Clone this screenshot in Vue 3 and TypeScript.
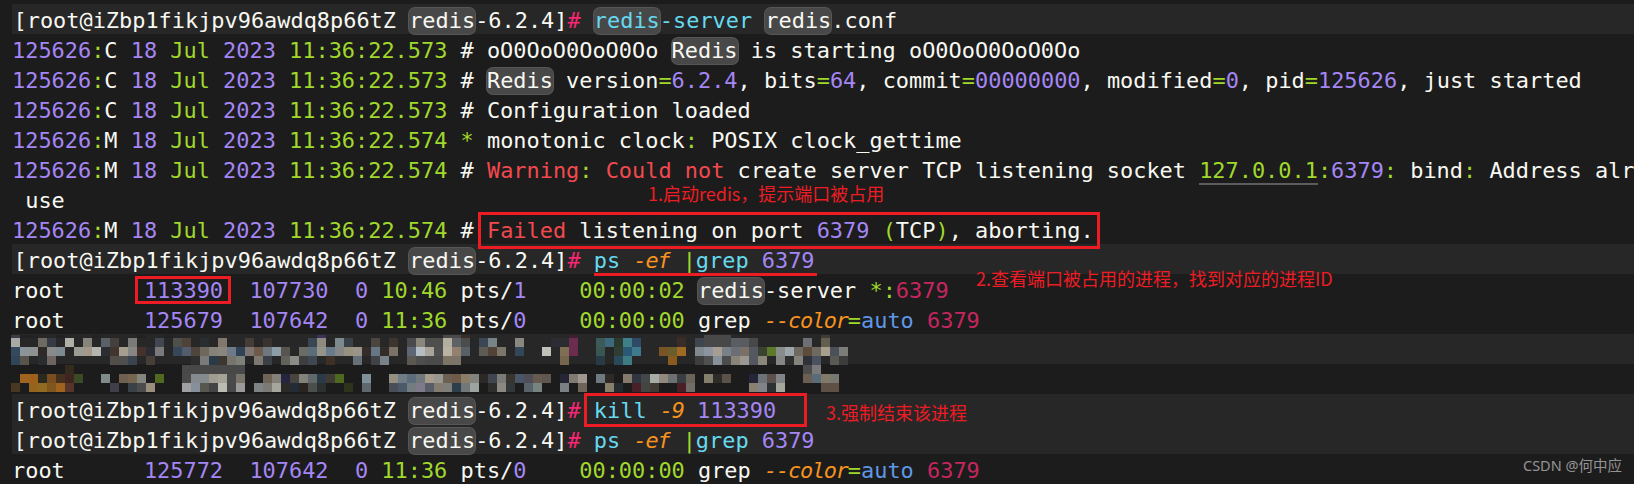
<script setup lang="ts">
type Tok = [string, string?]
interface Row { toks: Tok[]; lit?: boolean; empty?: boolean }

const chip = (c = 'w'): Tok => ['redis', 'chip ' + c]
const prompt = (): Tok[] => [
  ['[root@iZbp1fikjpv96awdq8p66tZ ', 'w'],
  chip(),
  ['-6.2.4]', 'w'],
  ['#', 'pk'],
  [' ']
]
const log = (role: string, ms: string): Tok[] => [
  ['125626', 'p'], [':', 'g'], [role + ' ', 'w'],
  ['18', 'p'], [' '], ['Jul', 'g'], [' '], ['2023', 'p'], [' '],
  ['11:36:22.' + ms, 'g'], [' ']
]
const psGrep = (): Tok[] => [
  ...prompt(),
  ['ps', 'c'], [' '], ['-ef', 'o'], [' '], ['|', 'g'], ['grep', 'c'], [' '], ['6379', 'p']
]
const proc = (pid: string, ppid: string, start: string, tty: string, time: string): Tok[] => [
  ['root      ', 'w'], [pid, 'p'], ['  '], [ppid, 'p'], ['  '], ['0', 'p'], [' '],
  [start, 'g'], [' '], ['pts/', 'w'], [tty, 'p'], ['    '], [time, 'g'], [' ']
]
const grepTail = (): Tok[] => [
  ['grep ', 'w'], ['--color', 'o'], ['=', 'g'], ['auto', 'b'], [' '], ['6379', 'r2']
]

const rows: Row[] = [
  { lit: true, toks: [...prompt(), ['redis', 'chip c'], ['-server ', 'c'], chip(), ['.conf', 'w']] },
  { toks: [...log('C', '573'), ['# oO0OoO0OoO0Oo ', 'w'], ['Redis', 'chip w'], [' is starting oO0OoO0OoO0Oo', 'w']] },
  { toks: [...log('C', '573'), ['# ', 'w'], ['Redis', 'chip w'], [' version', 'w'], ['=', 'g'], ['6.2.4', 'p'], [', bits', 'w'], ['=', 'g'], ['64', 'p'], [', commit', 'w'], ['=', 'g'], ['00000000', 'p'], [', modified', 'w'], ['=', 'g'], ['0', 'p'], [', pid', 'w'], ['=', 'g'], ['125626', 'p'], [', just started', 'w']] },
  { toks: [...log('C', '573'), ['# Configuration loaded', 'w']] },
  { toks: [...log('M', '574'), ['* ', 'g'], ['monotonic clock', 'w'], [':', 'g'], [' POSIX clock_gettime', 'w']] },
  { toks: [...log('M', '574'), ['# ', 'w'], ['Warning', 'r'], [':', 'g'], [' '], ['Could not', 'r'], [' create server TCP listening socket ', 'w'], ['127.0.0.1', 'g link'], [':', 'g'], ['6379', 'p'], [':', 'g'], [' bind', 'w'], [':', 'g'], [' Address alr', 'w']] },
  { toks: [[' use', 'w']] },
  { toks: [...log('M', '574'), ['# ', 'w'], ['Failed', 'r'], [' listening on port ', 'w'], ['6379', 'p'], [' '], ['(', 'g'], ['TCP', 'w'], [')', 'g'], [', aborting.', 'w']] },
  { lit: true, toks: psGrep() },
  { toks: [...proc('113390', '107730', '10:46', '1', '00:00:02'), chip(), ['-server ', 'w'], ['*:', 'g'], ['6379', 'r2']] },
  { toks: [...proc('125679', '107642', '11:36', '0', '00:00:00'), ...grepTail()] },
  { lit: true, empty: true, toks: [] },
  { empty: true, toks: [] },
  { lit: true, toks: [...prompt(), ['kill', 'c'], [' '], ['-9', 'o'], [' '], ['113390', 'p']] },
  { lit: true, toks: psGrep() },
  { toks: [...proc('125772', '107642', '11:36', '0', '00:00:00'), ...grepTail()] }
]

const CELL = 9
const mosaicTop = '0:3a3e44 1:222222 2:222222 5:222222 9:222222 14:222222 17:222222 34:3c3058 48:4a4a4a 49:4a4a4a 50:3a2c26 62:3a2030 74:322722 77:484848 78:484848 79:484848 90:3f3c36'
const mosaicData: string[] = [
  '0:a8aba3 3:6f6a62 4:353a45 6:b0b0a6 8:87857b 10:5a6068 11:46403c 13:7a7a78 16:414650 18:50504a 19:4f4238 21:2a2d30 23:80786c 26:443c36 28:38332f 33:3a4652 34:8e8a80 36:7c8a90 37:3a4048 40:4a463e 42:3e342e 44:4a4a4c 45:8a867c 46:4e4e4c 47:4e4e4c 48:b4aea0 49:5e6264 50:4a4c4e 52:3c4654 53:768488 56:88887e 60:2c2c34 61:2c2c30 62:6c2c50 65:3e5a58 66:3c6a7c 67:2a3a2f 68:3f8088 69:2e4a66 74:3a2c26 76:3f4650 77:484848 78:484848 79:484848 80:5a5e64 81:585c60 82:484848 88:6c7074 90:645e50',
  '0:34495c 1:8a9499 2:8e9291 3:2f2a27 4:8a8a8a 5:7d8a92 7:9a9c94 8:a3978a 9:b4b4b0 10:2a2e33 11:40362f 12:a69f90 13:868684 14:45322a 15:2b2b35 16:7a7a7c 18:36475a 19:535c6c 20:4f453d 21:6e675c 22:85827a 23:8a867d 24:6f7a88 25:2f4256 26:7e7472 27:6d5a4a 28:6f7880 29:8d9da8 30:5a544e 32:6c6c66 33:5c6c78 34:96948a 35:687c8c 36:868686 37:96927e 38:9a948a 39:342c28 40:667684 41:342c28 42:7a7266 44:5c6674 45:b4bcc4 46:a8a49a 47:505050 48:bab2a2 49:94806e 50:586068 52:5e5a54 53:524238 54:7c7668 56:34465a 59:c0c0b8 61:7e6e54 62:6c2c50 65:3a5652 67:2e3e32 68:2c5878 69:3c7a8c 72:7a5424 73:6a5e2c 74:a06a22 76:808a8e 77:8c94a0 78:a69e92 79:7a8088 80:6a6e78 81:7a7066 82:545860 83:3a4230 84:5c7a28 85:888c8c 86:9ea6ac 87:6e6a62 88:5e4c3a 89:6e6a62 90:a8a08c 91:4c5058 92:7c7c78',
  '0:304558 1:58544c 3:2a2d30 4:6e6560 11:524e48 12:4f4f50 13:3a444e 15:453f38 20:2e2e2e 21:7a7a78 22:2a3a48 23:3c3630 24:76746c 25:7e807a 27:7d7870 28:3a4046 30:63625a 31:8a8c88 32:3e3e3e 33:3e4852 35:3e3024 38:667078 40:404248 41:788288 44:5a5850 45:4e4e4e 46:4a4a4a 47:4a4a4a 48:7c7464 49:7c7468 61:76664e 65:283a44 67:2a4a5a 68:3e7c84 73:8a5a1e 76:3e3e3e 77:505050 78:88909a 79:4c4c4c 80:8a8478 81:9a9890 82:545660 83:8a867a 85:868686 86:2e2e2e 87:84847c 88:303038 89:4a5260 91:5a5a54 92:3c3c3a',
  '6:352a1e 19:484848 20:484848 21:484848 22:484848 23:484848 24:484848 25:484848 88:4c4c4c 89:7a7a7a',
  '1:9f6420 2:a0601c 3:2a2a20 4:7a4d20 5:43301f 6:3f2420 7:3a4a24 10:7f8a8a 12:6e5f4e 13:766650 14:83857e 16:50681f 19:4a4a4a 20:858a8f 21:858a8f 22:a09c92 23:a5a296 24:4a4a4a 25:7a736b 28:6e6556 29:857f7a 30:252540 31:4a443e 32:82827a 33:60686c 34:2c3a48 35:3f3a34 36:4f6820 39:7f9098 42:958f82 43:6f7c86 44:5c6c7a 45:70787c 46:a89c8c 47:98988e 48:6c6052 49:6e5c48 50:8c7d68 51:84847e 52:2c2825 53:3f4650 54:7c7a76 55:38342e 56:4c5468 57:4e4e58 58:665a50 59:605750 61:252535 62:807a72 63:a09890 65:6f7a80 66:302a26 68:84796a 69:2f3640 70:43474a 71:a8aca6 72:92897e 73:6c7072 74:3a3e42 75:6a6458 77:847e6c 78:2e2c28 79:5a5248 82:25253a 83:6c7276 84:5c504c 85:808488 88:6a5f52 89:5a6c7a 90:827a68 91:787872',
  '0:483822 2:94631e 3:8f6a20 4:80561e 5:a0621f 6:58352a 11:3f3f4a 13:3a4248 14:4c4c4c 15:9a8e7c 19:a0a0a0 20:86909a 21:585650 22:444444 23:bcbcb2 24:484848 25:9a9a9a 27:7e8484 28:7c7a74 29:a6a69c 30:2c2a26 31:222c36 32:2a2320 33:4a4e4c 34:2c3030 37:2e331e 39:5f686c 42:4a4e58 43:4a5a68 44:757c80 45:7e7a8c 46:585c64 47:847c70 48:807e78 49:2c3e4c 50:70787a 51:9ca4a0 53:2e2e2c 54:8a8880 55:30383a 57:586268 58:788480 61:7a8084 63:6e6458 66:88806c 67:242c30 69:4a2028 70:444440 71:403a34 74:4a2026 75:706c66 82:8a8070 83:808488 84:2c3234 85:a4a89c 90:5e5044 91:5e5044'
]
const parse = (line: string, y: number, h: number) =>
  line.split(' ').map((part) => {
    const [col, hex] = part.split(':')
    return { x: Number(col) * CELL, y, h, fill: '#' + hex }
  })
const mosaic = [
  ...parse(mosaicTop, 0, 3),
  ...mosaicData.flatMap((line, i) => parse(line, 3 + i * CELL, CELL))
]
</script>

<template>
  <div class="term">
    <div class="clip"><div class="line above">         p          g      j                    p</div></div>
    <div v-for="(row, i) in rows" :key="i" class="line" :class="{ lit: row.lit }">
      <span v-for="(t, j) in row.toks" :key="j" :class="t[1]">{{ t[0] }}</span>
    </div>

    <svg class="mosaic" width="846" height="57" viewBox="0 0 846 57" shape-rendering="crispEdges" aria-hidden="true">
      <rect v-for="(m, k) in mosaic" :key="k" :x="m.x" :y="m.y" width="9" :height="m.h" :fill="m.fill" />
    </svg>

    <div class="box box-failed"></div>
    <div class="box box-pid"></div>
    <div class="box box-kill"></div>
    <div class="rule"></div>

    <div class="note note-1">1.启动redis，提示端口被占用</div>
    <div class="note note-2">2.查看端口被占用的进程，找到对应的进程ID</div>
    <div class="note note-3">3.强制结束该进程</div>
    <div class="mark">CSDN @何中应</div>
  </div>
</template>

<style scoped>
.term {
  position: relative;
  width: 1634px;
  height: 484px;
  overflow: hidden;
  background: #1c1c1c;
  color: #f8f8f2;
  font-family: "DejaVu Sans Mono", "Liberation Mono", monospace;
  font-size: 21.92px;
}
.clip {
  height: 4px;
  overflow: hidden;
}
.above {
  margin-top: -29px;
}
.line {
  height: 30px;
  line-height: 34px;
  padding-left: 12px;
  white-space: pre;
}
.lit {
  margin-left: 12px;
  padding-left: 1.5px;
  background: #272727;
}
.w { color: #f8f8f2; }
.p { color: #a586f5; }
.g { color: #a0d82c; }
.c { color: #66d9ef; }
.o { color: #f7931e; font-style: italic; letter-spacing: -1.2px; }
.b { color: #5f97e8; }
.r { color: #f2494f; }
.r2 { color: #c5265f; }
.pk { color: #f92672; }
.link {
  border-bottom: 2px solid #5c5c5c;
}
.chip {
  display: inline-block;
  line-height: 26px;
  background: #484848;
  border-radius: 6px;
  box-shadow: 0 0 0 1px #565656;
}
.mosaic {
  position: absolute;
  left: 11px;
  top: 335px;
}
.box {
  position: absolute;
  box-sizing: border-box;
  border: 3px solid #ed1c24;
}
.box-failed { left: 478px; top: 212px; width: 622px; height: 37px; }
.box-pid { left: 135px; top: 276px; width: 96px; height: 28px; }
.box-kill { left: 584px; top: 393px; width: 223px; height: 34px; }
.rule {
  position: absolute;
  left: 594px;
  top: 273px;
  width: 223px;
  height: 3px;
  background: #ed1c24;
}
.note {
  position: absolute;
  font-family: "Noto Sans CJK SC", "Noto Sans", sans-serif;
  font-size: 18px;
  line-height: 24px;
  color: #ed1c24;
  white-space: nowrap;
}
.note-1 { left: 648px; top: 181px; }
.note-2 { left: 976px; top: 266px; }
.note-3 { left: 826px; top: 400px; }
.mark {
  position: absolute;
  left: 1523px;
  top: 454px;
  font-family: "Noto Sans", "Noto Sans CJK SC", sans-serif;
  font-size: 14.5px;
  line-height: 22px;
  color: #949494;
  white-space: nowrap;
}
</style>
